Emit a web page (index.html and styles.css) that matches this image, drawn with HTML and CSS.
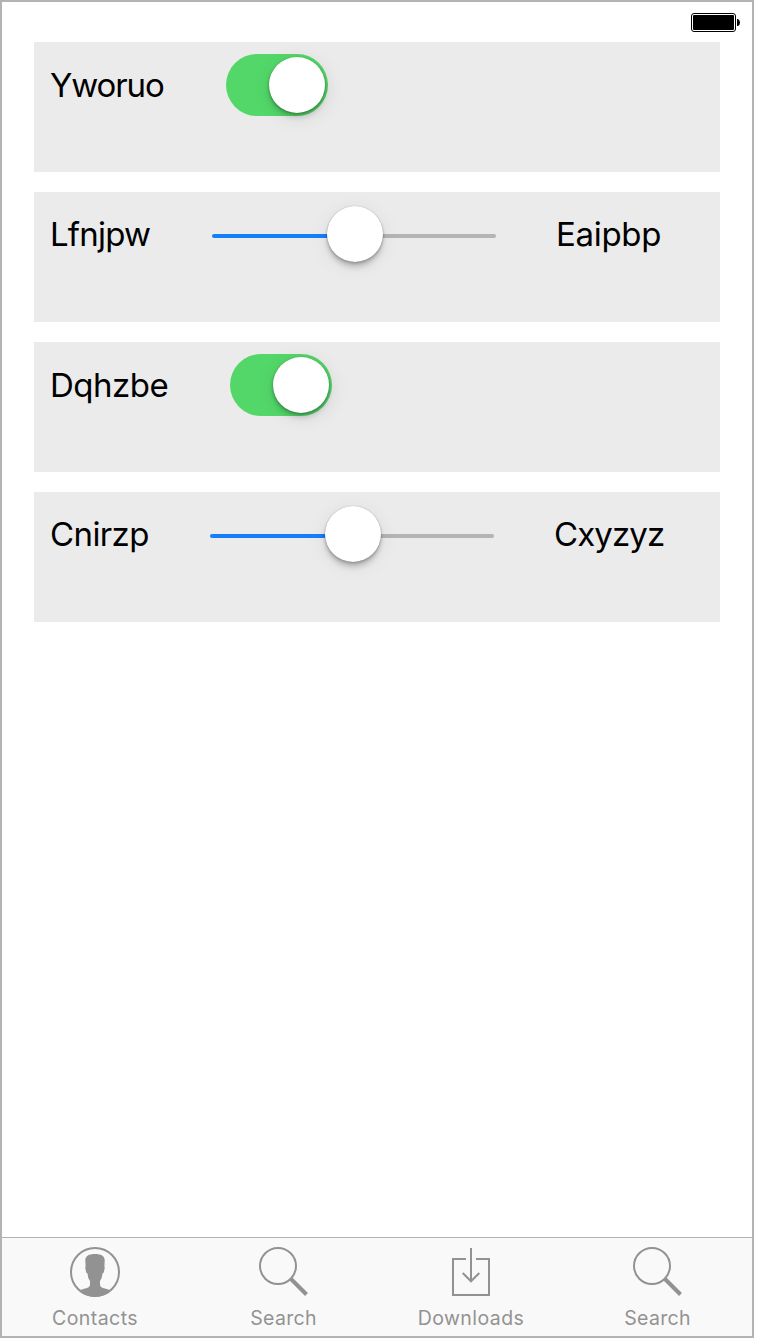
FILE: index.html
```html
<!DOCTYPE html>
<html lang="en">
<head>
<meta charset="utf-8">
<title>Settings</title>
<link rel="stylesheet" href="styles.css">
</head>
<body>
<div class="phone">
  <header class="status">
    <svg width="50" height="20" viewBox="0 0 50 20"><rect x=".5" y=".5" width="44" height="18" rx="2.5" fill="#fff" stroke="#000"/><rect x="2" y="2" width="41" height="15" rx="1" fill="#000"/><path d="M46 6h1q2 1 2 3.500t-2 3.500h-1z" fill="#000"/></svg>
  </header>
  <main class="cards">
    <section class="card switch-card">
      <span class="label l1">Yworuo</span>
      <span class="switch"><span class="knob"></span></span>
    </section>
    <section class="card slider-card">
      <span class="label l2">Lfnjpw</span>
      <span class="slider"><span class="fill"></span><span class="knob thumb"></span><span class="rest"></span></span>
      <span class="value v1">Eaipbp</span>
    </section>
    <section class="card switch-card">
      <span class="label l3">Dqhzbe</span>
      <span class="switch"><span class="knob"></span></span>
    </section>
    <section class="card slider-card">
      <span class="label l4">Cnirzp</span>
      <span class="slider"><span class="fill"></span><span class="knob thumb"></span><span class="rest"></span></span>
      <span class="value v2">Cxyzyz</span>
    </section>
  </main>
  <nav class="tabs">
    <div class="tab"><svg width="52" height="52" viewBox="0 0 52 52"><circle cx="26" cy="26" r="24" fill="none" stroke="#929292" stroke-width="2"/><path d="M26 8C20 8 16.300 10 16.300 14.500L16.600 20.500L16.200 21.500L17.200 26.500L18.500 27.500L19.300 32L21 35V39Q20.500 41.500 16 42.500L9.500 44.500Q17 51 26 51T42.500 44.500L36 42.500Q31.500 41.500 31 39V35L32.700 32L33.500 27.500L34.800 26.500L35.800 21.500L35.400 20.500L35.700 14.500C35.700 10 32 8 26 8Z" fill="#929292"/></svg><span>Contacts</span></div>
    <div class="tab wide"><svg width="52" height="52" viewBox="0 0 52 52"><circle cx="21" cy="20" r="18" fill="none" stroke="#929292" stroke-width="2"/><path d="M34 33L49.500 48.500" fill="none" stroke="#929292" stroke-width="4"/></svg><span class="search">Search</span></div>
    <div class="tab"><svg width="52" height="52" viewBox="0 0 52 52"><path d="M21 13H8V49H44V13H31M26 2V35M17.700 27L26 35.300L34.300 27" fill="none" stroke="#929292" stroke-width="2"/></svg><span>Downloads</span></div>
    <div class="tab"><svg width="52" height="52" viewBox="0 0 52 52"><circle cx="21" cy="20" r="18" fill="none" stroke="#929292" stroke-width="2"/><path d="M34 33L49.500 48.500" fill="none" stroke="#929292" stroke-width="4"/></svg><span class="search">Search</span></div>
  </nav>
</div>
</body>
</html>
```
FILE: styles.css
```css
* { box-sizing: border-box; }
body { margin: 0; background: #fff; font-family: Inter, "Liberation Sans", sans-serif; }
.phone { display: flex; flex-direction: column; width: 754px; height: 1338px; border: 2px solid #b3b3b3; }
.status { display: flex; justify-content: flex-end; height: 40px; padding: 11px 11px 0 0; }
.cards { display: flex; flex: 1; flex-direction: column; gap: 20px; padding: 0 32px; }
.card { display: flex; align-items: flex-start; height: 130px; padding: 12px 16px; background: #ebebeb; }
.label, .value { font-size: 33px; line-height: 40px; white-space: nowrap; color: #000; }
.label { flex: none; margin-top: 11px; }
.slider-card .label, .value { margin-top: 10px; }
.l1 { width: 176px; letter-spacing: -1.1px; }
.l2 { width: 162px; letter-spacing: -0.8px; }
.l3 { width: 180px; letter-spacing: -0.5px; }
.l4 { width: 160px; letter-spacing: -0.6px; }
.value { margin-left: 60px; }
.v1 { letter-spacing: -0.3px; }
.v2 { letter-spacing: -0.9px; }
.switch { display: flex; justify-content: flex-end; width: 102px; height: 62px; padding: 3px; border-radius: 31px; background: #53d769; }
.knob { flex: none; width: 56px; height: 56px; border-radius: 50%; background: #fff; box-shadow: 0 5px 5px rgba(0,0,0,.12), 0 1px 3px rgba(0,0,0,.35), 2px 4px 20px rgba(0,0,0,.1); }
.slider { display: flex; align-items: center; width: 284px; height: 64px; }
.thumb { position: relative; top: -2px; box-shadow: 0 0 1px rgba(0,0,0,.35), 0 6px 5px rgba(0,0,0,.13), 0 2px 3px rgba(0,0,0,.22), 0 4px 20px rgba(0,0,0,.08); }
.fill, .rest { height: 4px; }
.fill { width: 115px; border-radius: 2px 0 0 2px; background: #157efb; }
.rest { flex: 1; border-radius: 0 2px 2px 0; background: #b4b4b4; }
.tabs { display: flex; height: 99px; border-top: 1px solid #b2b2b2; background: #f9f9f9; }
.tab { display: flex; flex: none; flex-direction: column; align-items: center; width: 186px; padding-top: 8px; color: #929292; }
.wide { width: 190px; }
.tab svg { flex: none; }
.tab span { margin-top: 8px; font-size: 19.5px; line-height: 24px; letter-spacing: 0.45px; }
.tab .search { padding-left: 1px; letter-spacing: 0.3px; }
```
